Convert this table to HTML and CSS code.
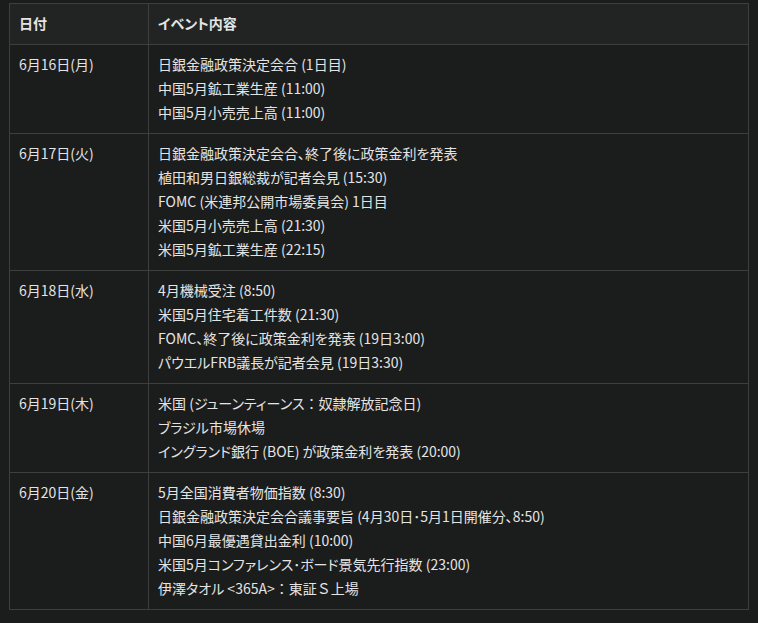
FILE: index.html
```html
<!DOCTYPE html>
<html lang="ja">
<head>
<meta charset="utf-8">
<link rel="stylesheet" href="styles.css">
</head>
<body>
<table class="events">
  <thead>
    <tr><th class="col-date">日付</th><th>イベント内容</th></tr>
  </thead>
  <tbody>
    <tr>
      <td class="col-date">6月16日(月)</td>
      <td>
        <div>日銀金融政策決定会合 (1日目)</div>
        <div>中国5月鉱工業生産 (11:00)</div>
        <div>中国5月小売売上高 (11:00)</div>
      </td>
    </tr>
    <tr>
      <td class="col-date">6月17日(火)</td>
      <td>
        <div>日銀金融政策決定会合、終了後に政策金利を発表</div>
        <div>植田和男日銀総裁が記者会見 (15:30)</div>
        <div>FOMC (米連邦公開市場委員会) 1日目</div>
        <div>米国5月小売売上高 (21:30)</div>
        <div>米国5月鉱工業生産 (22:15)</div>
      </td>
    </tr>
    <tr>
      <td class="col-date">6月18日(水)</td>
      <td>
        <div>4月機械受注 (8:50)</div>
        <div>米国5月住宅着工件数 (21:30)</div>
        <div>FOMC、終了後に政策金利を発表 (19日3:00)</div>
        <div>パウエルFRB議長が記者会見 (19日3:30)</div>
      </td>
    </tr>
    <tr>
      <td class="col-date">6月19日(木)</td>
      <td>
        <div>米国 (ジューンティーンス<span class="full">：</span>奴隷解放記念日)</div>
        <div>ブラジル市場休場</div>
        <div>イングランド銀行 (BOE) が政策金利を発表 (20:00)</div>
      </td>
    </tr>
    <tr>
      <td class="col-date">6月20日(金)</td>
      <td>
        <div>5月全国消費者物価指数 (8:30)</div>
        <div>日銀金融政策決定会合議事要旨 (4月30日･5月1日開催分、8:50)</div>
        <div>中国6月最優遇貸出金利 (10:00)</div>
        <div>米国5月コンファレンス･ボード景気先行指数 (23:00)</div>
        <div>伊澤タオル &lt;365A&gt;<span class="full">：東証Ｓ</span>上場</div>
      </td>
    </tr>
  </tbody>
</table>
</body>
</html>
```
FILE: styles.css
```css
html, body {
  background: #1b1c1c;
}
body {
  margin: 3px 9px;
  font-family: "Noto Sans CJK JP", "Noto Sans", sans-serif;
  font-size: 14px;
  color: #e4e4e4;
  font-feature-settings: "palt";
}
.events {
  width: 740px;
  border-collapse: separate;
  border-spacing: 0;
  border-right: 1px solid #3d3e3e;
  border-bottom: 1px solid #3d3e3e;
}
.events th,
.events td {
  border-top: 1px solid #3d3e3e;
  border-left: 1px solid #3d3e3e;
  text-align: left;
  vertical-align: top;
  padding: 7px 9px 9px 9px;
  line-height: 24px;
}
.events th {
  background: #222323;
  font-weight: bold;
}
.events td {
  background: #1b1c1c;
}
.col-date {
  width: 120px;
}
.full {
  font-feature-settings: normal;
}
```
